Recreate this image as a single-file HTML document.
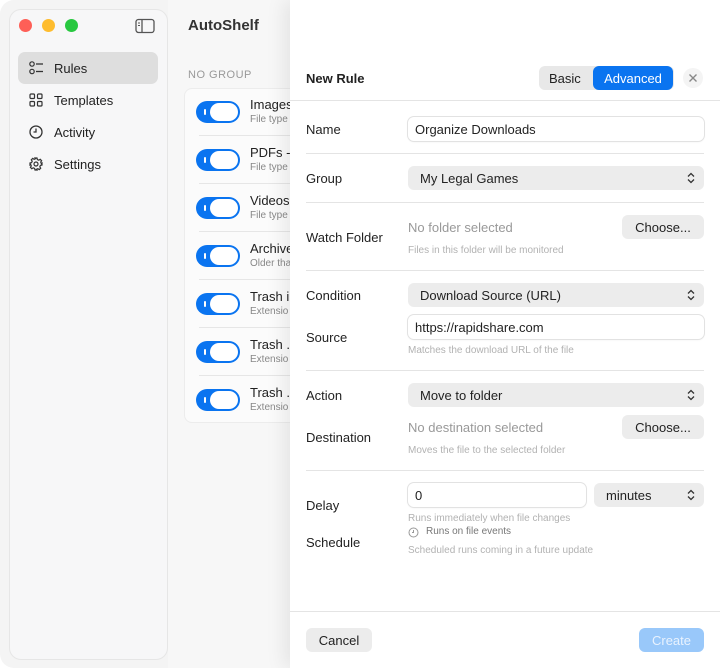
<!DOCTYPE html>
<html><head><meta charset="utf-8"><style>
*{box-sizing:border-box;margin:0;padding:0}
body{width:720px;height:668px;overflow:hidden;background:#fff;font-family:"Liberation Sans",sans-serif;color:#222;position:relative;font-size:13px}
.a{position:absolute;white-space:nowrap}
.win{position:absolute;left:0;top:0;width:740px;height:668px;background:#f4f4f4;border-radius:14px}
.main{position:absolute;left:168px;top:0;width:560px;height:668px;background:#f7f7f7}
.side{position:absolute;left:9px;top:9px;width:159px;height:651px;background:#f7f7f8;border:1px solid #e6e6e6;border-radius:12px}
.nav{position:absolute;left:18px;width:140px;height:32px;border-radius:7px;font-size:13px;line-height:33px;padding-left:36px}
.nav svg{position:absolute;left:11px;top:9px}
.card{position:absolute;left:184px;top:88px;width:130px;height:335px;background:#fbfbfb;border:1px solid #ececec;border-radius:8px}
.tg{position:absolute;left:196px;width:44px;height:22px;background:#0a74f0;border-radius:11px}
.tg:after{content:"";position:absolute;right:2px;top:2px;width:28px;height:18px;background:#fff;border-radius:9px}
.tg:before{content:"";position:absolute;left:8px;top:8px;width:2px;height:6px;background:#fff;border-radius:1px}
.rt{position:absolute;left:250px;font-size:13px;font-weight:500;color:#222}
.rs{position:absolute;left:250px;font-size:10px;color:#888}
.rl{position:absolute;left:199px;width:115px;height:1px;background:#e6e6e6}
.panel{position:absolute;left:290px;top:0;width:430px;height:668px;background:#fff;box-shadow:-6px 0 18px rgba(0,0,0,.08)}
.lab{position:absolute;left:16px;font-size:13px;color:#222;line-height:16px}
.sep{position:absolute;left:16px;width:398px;height:1px;background:#e4e4e4}
.inp{position:absolute;background:#fff;border-radius:6px;box-shadow:0 0 0 1px #e2e2e2,0 1px 2px rgba(0,0,0,.06);font-size:13px;line-height:25px;padding-left:7px;height:24px}
.sel{position:absolute;background:#ececec;border-radius:6px;font-size:13px;line-height:25px;padding-left:12px;height:24px}
.sel svg{position:absolute;right:9px;top:6px}
.btn{position:absolute;background:#ececec;border-radius:6px;font-size:13px;line-height:25px;text-align:center;height:24px}
.mut{position:absolute;color:#999;font-size:13px;line-height:16px}
.hint{position:absolute;color:#b2b2b2;font-size:10px;line-height:12px}
</style></head><body>
<div class="win"></div>
<div class="main"></div>
<div class="side"></div>
<div class="a" style="left:19px;top:19px;width:13px;height:13px;border-radius:50%;background:#fe5f57"></div>
<div class="a" style="left:42px;top:19px;width:13px;height:13px;border-radius:50%;background:#febc2e"></div>
<div class="a" style="left:65px;top:19px;width:13px;height:13px;border-radius:50%;background:#28c840"></div>
<svg class="a" style="left:135px;top:18px" width="20" height="16" viewBox="0 0 20 16"><rect x="1" y="1.5" width="18" height="13" rx="2.5" fill="none" stroke="#555" stroke-width="1.3"/><line x1="7" y1="2" x2="7" y2="14" stroke="#555" stroke-width="1.3"/><line x1="3" y1="5" x2="5" y2="5" stroke="#555"/><line x1="3" y1="7.5" x2="5" y2="7.5" stroke="#555"/></svg>
<div class="nav" style="top:52px;background:#dedede">
<svg width="16" height="14" viewBox="0 0 16 14"><circle cx="3" cy="3" r="2.2" fill="none" stroke="#333" stroke-width="1.2"/><circle cx="3" cy="10.5" r="2.2" fill="none" stroke="#333" stroke-width="1.2"/><line x1="7" y1="3" x2="14" y2="3" stroke="#333" stroke-width="1.3"/><line x1="7" y1="10.5" x2="14" y2="10.5" stroke="#333" stroke-width="1.3"/></svg>Rules</div>
<div class="nav" style="top:84px">
<svg width="14" height="14" viewBox="0 0 14 14" fill="none" stroke="#333" stroke-width="1.2"><rect x="1" y="1" width="4.5" height="4.5" rx="1"/><rect x="8.5" y="1" width="4.5" height="4.5" rx="1"/><rect x="1" y="8.5" width="4.5" height="4.5" rx="1"/><rect x="8.5" y="8.5" width="4.5" height="4.5" rx="1"/></svg>Templates</div>
<div class="nav" style="top:116px">
<svg width="14" height="14" viewBox="0 0 14 14" fill="none" stroke="#333" stroke-width="1.3"><circle cx="7" cy="7" r="6"/><path d="M7 3.5V7H4.5"/></svg>Activity</div>
<div class="nav" style="top:148px">
<svg width="14" height="14" viewBox="0 0 14 14" fill="none" stroke="#333" stroke-width="1.2"><circle cx="7" cy="7" r="2"/><path d="M6 1h2l.4 1.6 1.4.6 1.4-.9 1.4 1.4-.9 1.4.6 1.4L13 6v2l-1.6.4-.6 1.4.9 1.4-1.4 1.4-1.4-.9-1.4.6L8 13H6l-.4-1.6-1.4-.6-1.4.9-1.4-1.4.9-1.4-.6-1.4L1 8V6l1.6-.4.6-1.4-.9-1.4 1.4-1.4 1.4.9 1.4-.6z"/></svg>Settings</div>

<div class="a" style="left:188px;top:17px;font-size:15px;font-weight:bold;color:#333">AutoShelf</div>
<div class="a" style="left:188px;top:69px;font-size:11px;color:#999;letter-spacing:.5px">NO GROUP</div>
<div class="card"></div>
<div class="tg" style="top:101px"></div><div class="rt" style="top:97px">Images</div><div class="rs" style="top:114px">File type</div><div class="rl" style="top:135px"></div>
<div class="tg" style="top:149px"></div><div class="rt" style="top:145px">PDFs -</div><div class="rs" style="top:162px">File type</div><div class="rl" style="top:183px"></div>
<div class="tg" style="top:197px"></div><div class="rt" style="top:193px">Videos</div><div class="rs" style="top:210px">File type</div><div class="rl" style="top:231px"></div>
<div class="tg" style="top:245px"></div><div class="rt" style="top:241px">Archive</div><div class="rs" style="top:258px">Older tha</div><div class="rl" style="top:279px"></div>
<div class="tg" style="top:293px"></div><div class="rt" style="top:289px">Trash i</div><div class="rs" style="top:306px">Extensio</div><div class="rl" style="top:327px"></div>
<div class="tg" style="top:341px"></div><div class="rt" style="top:337px">Trash .</div><div class="rs" style="top:354px">Extensio</div><div class="rl" style="top:375px"></div>
<div class="tg" style="top:389px"></div><div class="rt" style="top:385px">Trash .</div><div class="rs" style="top:402px">Extensio</div>

<div class="panel">
<div class="lab" style="top:71px;font-weight:bold">New Rule</div>
<div class="a" style="left:249px;top:66px;width:135px;height:24px;background:#e8e8e8;border-radius:6px"></div>
<div class="a" style="left:259px;top:66px;font-size:13px;line-height:25px">Basic</div>
<div class="a" style="left:303px;top:66px;width:80px;height:24px;background:#0a74f0;border-radius:6px;color:#fff;font-size:13px;line-height:25px;text-align:center">Advanced</div>
<div class="a" style="left:393px;top:68px;width:20px;height:20px;border-radius:50%;background:#f4f4f4"></div>
<svg class="a" style="left:398px;top:73px" width="10" height="10" viewBox="0 0 10 10" stroke="#888" stroke-width="1.4"><path d="M1.5 1.5l7 7M8.5 1.5l-7 7"/></svg>
<div class="a" style="left:0;top:100px;width:430px;height:1px;background:#e4e4e4"></div>

<div class="lab" style="top:122px">Name</div>
<div class="inp" style="left:118px;top:117px;width:296px">Organize Downloads</div>
<div class="sep" style="top:153px"></div>
<div class="lab" style="top:171px">Group</div>
<div class="sel" style="left:118px;top:166px;width:296px">My Legal Games<svg width="8" height="12" viewBox="0 0 8 12" fill="none" stroke="#333" stroke-width="1.3"><path d="M1 4.5L4 1.5 7 4.5M1 7.5L4 10.5 7 7.5"/></svg></div>
<div class="sep" style="top:202px"></div>
<div class="lab" style="top:230px">Watch Folder</div>
<div class="mut" style="left:118px;top:220px">No folder selected</div>
<div class="btn" style="left:332px;top:215px;width:82px">Choose...</div>
<div class="hint" style="left:118px;top:245px">Files in this folder will be monitored</div>
<div class="sep" style="top:270px"></div>
<div class="lab" style="top:288px">Condition</div>
<div class="sel" style="left:118px;top:283px;width:296px">Download Source (URL)<svg width="8" height="12" viewBox="0 0 8 12" fill="none" stroke="#333" stroke-width="1.3"><path d="M1 4.5L4 1.5 7 4.5M1 7.5L4 10.5 7 7.5"/></svg></div>
<div class="lab" style="top:330px">Source</div>
<div class="inp" style="left:118px;top:315px;width:296px">https://rapidshare.com</div>
<div class="hint" style="left:118px;top:345px">Matches the download URL of the file</div>
<div class="sep" style="top:370px"></div>
<div class="lab" style="top:388px">Action</div>
<div class="sel" style="left:118px;top:383px;width:296px">Move to folder<svg width="8" height="12" viewBox="0 0 8 12" fill="none" stroke="#333" stroke-width="1.3"><path d="M1 4.5L4 1.5 7 4.5M1 7.5L4 10.5 7 7.5"/></svg></div>
<div class="lab" style="top:430px">Destination</div>
<div class="mut" style="left:118px;top:420px">No destination selected</div>
<div class="btn" style="left:332px;top:415px;width:82px">Choose...</div>
<div class="hint" style="left:118px;top:445px">Moves the file to the selected folder</div>
<div class="sep" style="top:470px"></div>
<div class="lab" style="top:498px">Delay</div>
<div class="inp" style="left:118px;top:483px;width:178px">0</div>
<div class="sel" style="left:304px;top:483px;width:110px">minutes<svg width="8" height="12" viewBox="0 0 8 12" fill="none" stroke="#333" stroke-width="1.3"><path d="M1 4.5L4 1.5 7 4.5M1 7.5L4 10.5 7 7.5"/></svg></div>
<div class="hint" style="left:118px;top:513px">Runs immediately when file changes</div>
<svg class="a" style="left:118px;top:527px" width="11" height="11" viewBox="0 0 11 11" fill="none" stroke="#999"><circle cx="5.5" cy="5.5" r="4.5"/><path d="M5.5 3v2.5H4"/></svg>
<div class="a" style="left:136px;top:526px;font-size:10px;color:#777">Runs on file events</div>
<div class="lab" style="top:535px">Schedule</div>
<div class="hint" style="left:118px;top:545px">Scheduled runs coming in a future update</div>
<div class="a" style="left:0;top:611px;width:430px;height:1px;background:#e4e4e4"></div>
<div class="btn" style="left:16px;top:628px;width:66px">Cancel</div>
<div class="btn" style="left:349px;top:628px;width:65px;background:#99c8fa;color:#e8f2fe">Create</div>
</div>
</body></html>
